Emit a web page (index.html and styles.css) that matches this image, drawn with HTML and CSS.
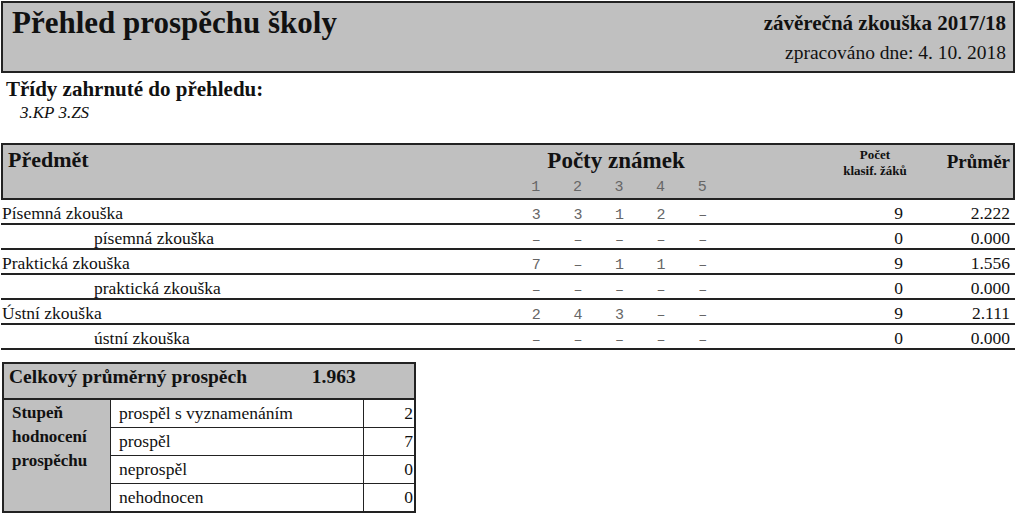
FILE: index.html
```html
<!DOCTYPE html>
<html lang="cs">
<head>
    <meta charset="UTF-8">
    <title>Přehled prospěchu školy</title>
    <link rel="stylesheet" href="styles.css">
</head>
<body>
    <div class="page">
        <div class="page-head">
            <h1>Přehled prospěchu školy</h1>
            <div class="head-info">
                <div class="exam">závěrečná zkouška 2017/18</div>
                <div class="processed">zpracováno dne: 4. 10. 2018</div>
            </div>
        </div>

        <h2 class="classes-title">Třídy zahrnuté do přehledu:</h2>
        <div class="classes">3.KP 3.ZS</div>

        <table class="grades">
            <colgroup>
                <col class="c-subject">
                <col class="c-grade"><col class="c-grade"><col class="c-grade"><col class="c-grade"><col class="c-grade">
                <col class="c-space">
                <col class="c-count">
                <col class="c-avg">
            </colgroup>
            <thead>
                <tr class="head-top">
                    <th rowspan="2" class="h-subject">Předmět</th>
                    <th colspan="5" class="h-grades">Počty známek</th>
                    <th rowspan="2" class="h-space"></th>
                    <th rowspan="2" class="h-count">Počet<br>klasif. žáků</th>
                    <th rowspan="2" class="h-avg">Průměr</th>
                </tr>
                <tr class="head-digits">
                    <th>1</th><th>2</th><th>3</th><th>4</th><th>5</th>
                </tr>
            </thead>
            <tbody>
                <tr>
                    <td>Písemná zkouška</td>
                    <td class="g">3</td><td class="g">3</td><td class="g">1</td><td class="g">2</td><td class="g">–</td>
                    <td></td><td class="num">9</td><td class="num avg">2.222</td>
                </tr>
                <tr class="sub">
                    <td>písemná zkouška</td>
                    <td class="g">–</td><td class="g">–</td><td class="g">–</td><td class="g">–</td><td class="g">–</td>
                    <td></td><td class="num">0</td><td class="num avg">0.000</td>
                </tr>
                <tr>
                    <td>Praktická zkouška</td>
                    <td class="g">7</td><td class="g">–</td><td class="g">1</td><td class="g">1</td><td class="g">–</td>
                    <td></td><td class="num">9</td><td class="num avg">1.556</td>
                </tr>
                <tr class="sub">
                    <td>praktická zkouška</td>
                    <td class="g">–</td><td class="g">–</td><td class="g">–</td><td class="g">–</td><td class="g">–</td>
                    <td></td><td class="num">0</td><td class="num avg">0.000</td>
                </tr>
                <tr>
                    <td>Ústní zkouška</td>
                    <td class="g">2</td><td class="g">4</td><td class="g">3</td><td class="g">–</td><td class="g">–</td>
                    <td></td><td class="num">9</td><td class="num avg">2.111</td>
                </tr>
                <tr class="sub">
                    <td>ústní zkouška</td>
                    <td class="g">–</td><td class="g">–</td><td class="g">–</td><td class="g">–</td><td class="g">–</td>
                    <td></td><td class="num">0</td><td class="num avg">0.000</td>
                </tr>
            </tbody>
        </table>

        <div class="summary">
            <div class="sum-title">
                <span>Celkový průměrný prospěch</span>
                <span class="sum-value">1.963</span>
            </div>
            <div class="level">Stupeň<br>hodnocení<br>prospěchu</div>
            <div class="label">prospěl s vyznamenáním</div>
            <div class="count">2</div>
            <div class="label">prospěl</div>
            <div class="count">7</div>
            <div class="label">neprospěl</div>
            <div class="count">0</div>
            <div class="label">nehodnocen</div>
            <div class="count">0</div>
        </div>
    </div>
</body>
</html>
```

FILE: styles.css
```css
body {
    margin: 0;
    padding: 1px 0 0 1px;
    font-family: "Liberation Serif", "Times New Roman", serif;
    color: #111;
    background: white;
}

.page {
    width: 1014px;
}

/* page header */
.page-head {
    display: flex;
    justify-content: space-between;
    height: 68px;
    background-color: #c0c0c0;
    border: 2px solid #222;
}

h1 {
    margin: 0;
    padding: 2px 0 0 9px;
    font-size: 31px;
    line-height: 36px;
    font-weight: bold;
}

.head-info {
    padding: 8px 7px 0 0;
    text-align: right;
}

.exam {
    font-size: 21px;
    line-height: 24px;
    font-weight: bold;
}

.processed {
    margin-top: 7px;
    font-size: 19.5px;
    line-height: 22px;
}

.classes-title {
    margin: 4px 0 0 5px;
    font-size: 21px;
    line-height: 24px;
    font-weight: bold;
}

.classes {
    margin: 2px 0 0 19px;
    font-size: 17px;
    line-height: 20px;
    font-style: italic;
}

/* grades table */
.grades {
    margin-top: 20px;
    width: 1014px;
    border-collapse: separate;
    border-spacing: 0;
    table-layout: fixed;
    font-size: 17.5px;
}

.c-subject { width: 514px; }
.c-grade { width: 41.6px; }
.c-space { width: 115px; }
.c-count { width: 74px; }
.c-avg { width: 103px; }

.grades th {
    padding: 0;
    background-color: #c0c0c0;
    vertical-align: top;
}

.head-top th {
    border-top: 2px solid #222;
}

.head-top th[rowspan],
.head-digits th {
    border-bottom: 2px solid #222;
}

.h-subject {
    border-left: 2px solid #222;
    text-align: left;
    padding: 2px 0 0 5px !important;
    font-size: 22px;
    line-height: 25px;
}

.h-grades {
    padding: 3px 6px 5px 0 !important;
    font-size: 23px;
    line-height: 26px;
}

.h-count {
    padding-top: 2px !important;
    font-size: 13px;
    line-height: 16px;
}

.h-avg {
    border-right: 2px solid #222;
    text-align: right;
    padding: 6px 3px 0 0 !important;
    font-size: 19px;
    line-height: 22px;
}

.head-digits th {
    padding: 1px 0 2px !important;
    font-family: "Liberation Mono", "Courier New", monospace;
    font-size: 15px;
    line-height: 16px;
    font-weight: normal;
    color: #666;
}

.grades td {
    height: 20px;
    padding: 3px 0 0 1px;
    line-height: 20px;
    vertical-align: baseline;
    white-space: nowrap;
    border-bottom: 2px solid #222;
}

.grades .sub td:first-child {
    padding-left: 93px;
}

.grades td.g {
    text-align: center;
    font-family: "Liberation Mono", "Courier New", monospace;
    font-size: 15px;
    line-height: 12px;
    color: #666;
}

.num {
    text-align: right;
    padding-right: 9px !important;
}

.num.avg {
    padding-right: 5px !important;
}

/* summary box */
.summary {
    display: grid;
    grid-template-columns: 106px 252px 50px;
    grid-template-rows: 35px repeat(4, 27px);
    gap: 1px;
    width: max-content;
    margin: 12px 0 0 1px;
    background-color: #222;
    border: 2px solid #222;
    font-size: 17.5px;
}

.summary > div {
    background-color: white;
}

.sum-title {
    grid-column: 1 / 4;
    margin-bottom: 1px;
    padding: 2px 0 0 5px;
    background-color: #c0c0c0 !important;
    font-size: 19.5px;
    line-height: 22px;
    font-weight: bold;
}

.sum-value {
    margin-left: 60px;
}

.level {
    grid-row: 2 / 6;
    padding: 1px 0 0 8px;
    background-color: #c0c0c0 !important;
    font-size: 17px;
    line-height: 24px;
    font-weight: bold;
}

.label {
    display: flex;
    align-items: center;
    padding-left: 8px;
}

.count {
    display: flex;
    align-items: center;
    justify-content: flex-end;
    padding-right: 1px;
}
```
